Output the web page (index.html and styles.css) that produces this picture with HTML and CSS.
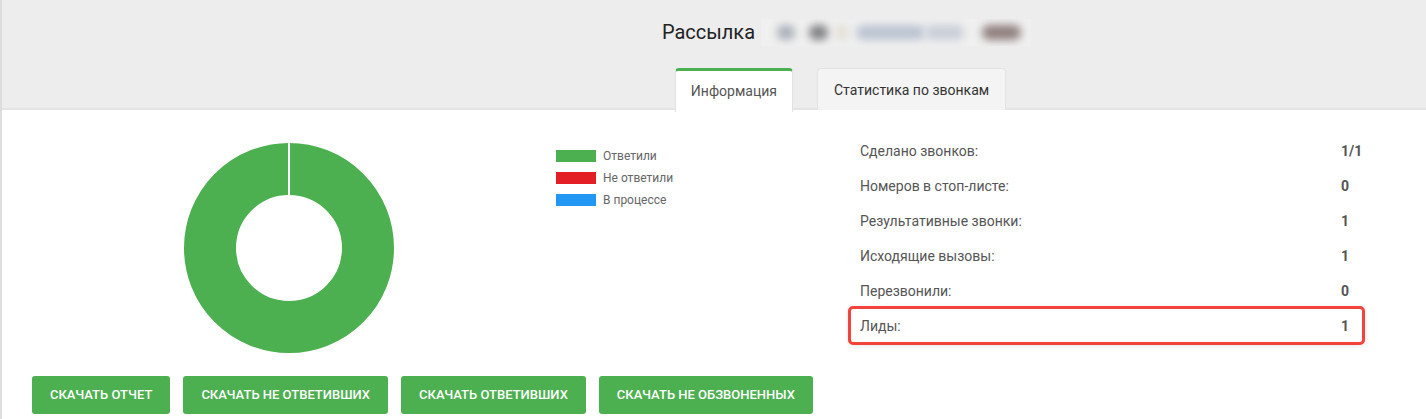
FILE: index.html
```html
<!DOCTYPE html>
<html lang="ru">

<head>
  <meta charset="utf-8">
  <meta name="viewport" content="width=device-width, initial-scale=1">
  <title>Рассылка</title>

  <link rel="stylesheet" href="styles.css">
</head>

<body>
  <div id="page">
    <header id="top">
      <h1 class="title">
        Рассылка
        <span class="hidden-name" aria-hidden="true">
          <i class="blob b1"></i><i class="blob b2"></i><i class="blob b3"></i><i class="blob b4"></i><i class="blob b5"></i><i class="blob b6"></i>
        </span>
      </h1>
      <ul id="tabs">
        <li class="tab active">Информация</li>
        <li class="tab">Статистика по звонкам</li>
      </ul>
    </header>

    <main id="info">
      <section class="left">
        <div class="chart">
          <svg class="donut" width="210" height="210" viewBox="0 0 210 210">
            <circle cx="105" cy="105" r="79" fill="none" stroke="#4caf50" stroke-width="52"/>
            <rect x="104" y="0" width="2" height="53" fill="#fff"/>
          </svg>
          <ul class="legend">
            <li><span class="swatch green"></span>Ответили</li>
            <li><span class="swatch red"></span>Не ответили</li>
            <li><span class="swatch blue"></span>В процессе</li>
          </ul>
        </div>
        <div class="buttons">
          <a class="btn" href="#">Скачать отчет</a>
          <a class="btn" href="#">Скачать не ответивших</a>
          <a class="btn" href="#">Скачать ответивших</a>
          <a class="btn" href="#">Скачать не обзвоненных</a>
        </div>
      </section>

      <section class="stats">
        <div class="row"><span class="label">Сделано звонков:</span><span class="value">1/1</span></div>
        <div class="row"><span class="label">Номеров в стоп-листе:</span><span class="value">0</span></div>
        <div class="row"><span class="label">Результативные звонки:</span><span class="value">1</span></div>
        <div class="row"><span class="label">Исходящие вызовы:</span><span class="value">1</span></div>
        <div class="row"><span class="label">Перезвонили:</span><span class="value">0</span></div>
        <div class="row marked"><span class="label">Лиды:</span><span class="value">1</span></div>
      </section>
    </main>
  </div>
</body>

</html>
```

FILE: styles.css
```css
html {
  background-color: #ffffff;
  color: #333333;
}

body {
  margin: 0;
  font-family: Roboto, "Noto Sans", Arial, sans-serif;
}

ul {
  list-style-type: none;
  margin: 0;
  padding: 0;
}

#page {
  border-left: 2px solid #dddddd;
  min-height: 419px;
  box-sizing: border-box;
}

/* header with title and tabs */
#top {
  background-color: #ededed;
  border-bottom: 2px solid #e4e4e4;
  height: 108px;
  padding-left: 265px;
  display: flex;
  flex-direction: column;
  align-items: center;
}

.title {
  margin: 18px 0 0 0;
  font-size: 20px;
  font-weight: 400;
  line-height: 28px;
  color: #222222;
  display: flex;
  align-items: center;
}

/* name is hidden behind a blur */
.hidden-name {
  display: inline-flex;
  align-items: center;
  width: 270px;
  height: 27px;
  margin-left: 6px;
  padding: 0 10px;
  box-sizing: border-box;
  background-color: #f0f0f0;
  overflow: hidden;
}

.blob {
  display: block;
  height: 15px;
  border-radius: 7px;
  filter: blur(4px);
}

.b1 { width: 18px; background-color: #a9b0b8; margin-left: 6px; }
.b2 { width: 20px; background-color: #7f8083; margin-left: 14px; }
.b3 { width: 8px; background-color: #ddd9cc; margin-left: 10px; }
.b4 { width: 70px; background-color: #bcc4d2; margin-left: 10px; }
.b5 { width: 40px; background-color: #c9ced8; }
.b6 { width: 40px; background-color: #8f7f7d; margin-left: 18px; }

#tabs {
  display: flex;
  align-items: flex-end;
  gap: 24px;
  margin-top: 20px;
  padding-right: 12px;
}

.tab {
  font-size: 14px;
  padding: 0 16px;
  box-sizing: border-box;
  border: 1px solid #e2e2e2;
  border-bottom: none;
  border-radius: 4px 4px 0 0;
  background-color: #f4f4f4;
  color: #333333;
  height: 42px;
  line-height: 42px;
}

.tab.active {
  background-color: #ffffff;
  color: #555555;
  border-top: 3px solid #4caf50;
  height: 44px;
  line-height: 40px;
  padding: 0 15px;
  position: relative;
  top: 2px;
}

/* information tab */
#info {
  display: flex;
}

.left {
  width: 818px;
  padding-left: 30px;
}

.chart {
  display: flex;
  align-items: flex-start;
  padding-top: 33px;
}

.donut {
  display: block;
  margin-left: 152px;
}

.legend {
  margin-left: 162px;
  padding-top: 2px;
  font-size: 12px;
  color: #666666;
}

.legend li {
  display: flex;
  align-items: center;
  height: 22px;
}

.swatch {
  display: inline-block;
  width: 40px;
  height: 12px;
  margin-right: 7px;
}

.green { background-color: #4caf50; }
.red { background-color: #e31e24; }
.blue { background-color: #2196f3; }

.buttons {
  display: flex;
  gap: 13px;
  margin-top: 23px;
}

.btn {
  display: block;
  height: 38px;
  line-height: 38px;
  padding: 0 18px;
  border-radius: 3px;
  background-color: #4caf50;
  color: #ffffff;
  font-size: 13px;
  font-weight: 500;
  text-transform: uppercase;
  text-decoration: none;
}

.stats {
  width: 513px;
  padding-top: 23px;
  font-size: 14px;
  color: #555555;
}

.row {
  display: flex;
  align-items: center;
  height: 35px;
  padding-left: 10px;
}

.label {
  flex: 1;
}

.value {
  width: 22px;
  font-weight: 700;
}

.row.marked {
  outline: 3px solid #f4433a;
  outline-offset: -1px;
  border-radius: 3px;
  box-shadow: 0 1px 6px rgba(0, 0, 0, 0.2);
}
```
